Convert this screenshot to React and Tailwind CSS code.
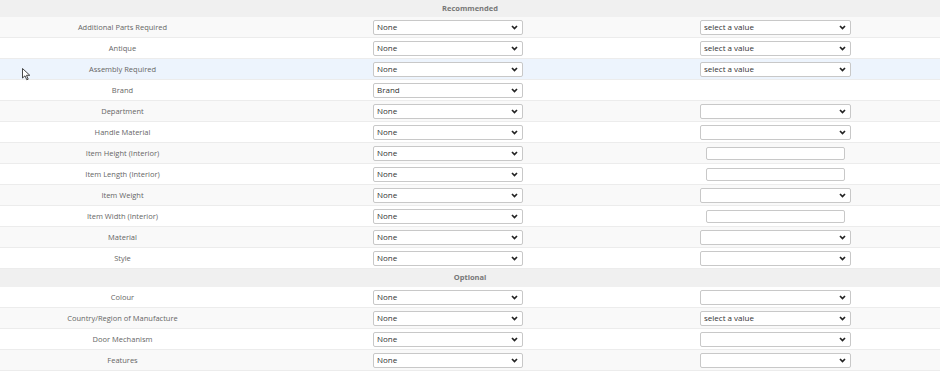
import React from 'react';

const recommended = [
  { label: 'Additional Parts Required', value: 'None', extra: 'select', text: 'select a value' },
  { label: 'Antique', value: 'None', extra: 'select', text: 'select a value' },
  { label: 'Assembly Required', value: 'None', extra: 'select', text: 'select a value', hover: true },
  { label: 'Brand', value: 'Brand', extra: null },
  { label: 'Department', value: 'None', extra: 'select', text: '' },
  { label: 'Handle Material', value: 'None', extra: 'select', text: '' },
  { label: 'Item Height (Interior)', value: 'None', extra: 'input' },
  { label: 'Item Length (Interior)', value: 'None', extra: 'input' },
  { label: 'Item Weight', value: 'None', extra: 'select', text: '' },
  { label: 'Item Width (Interior)', value: 'None', extra: 'input' },
  { label: 'Material', value: 'None', extra: 'select', text: '' },
  { label: 'Style', value: 'None', extra: 'select', text: '' },
];

const optional = [
  { label: 'Colour', value: 'None', extra: 'select', text: '' },
  { label: 'Country/Region of Manufacture', value: 'None', extra: 'select', text: 'select a value' },
  { label: 'Door Mechanism', value: 'None', extra: 'select', text: '' },
  { label: 'Features', value: 'None', extra: 'select', text: '' },
];

const Chevron = () => (
  <svg className="pointer-events-none absolute right-[5px] top-[5px]" width="7" height="5" viewBox="0 0 7 5">
    <path d="M1 1 L3.5 3.5 L6 1" fill="none" stroke="#222" strokeWidth="1.7" />
  </svg>
);

const FakeSelect = ({ value, width }) => (
  <div className={`relative h-[15px] ${width}`}>
    <select
      defaultValue={value}
      className="block h-[15px] w-full appearance-none rounded-[2px] border border-[#c8c8c8] bg-white py-0 pl-[3px] text-[8px] leading-none text-[#333] outline-none"
    >
      <option value={value}>{value}</option>
    </select>
    <Chevron />
  </div>
);

const Row = ({ row, striped }) => {
  const bg = row.hover ? 'bg-[#edf4fd]' : striped ? 'bg-[#f9f9f9]' : 'bg-white';
  return (
    <div className={`grid h-[21px] grid-cols-[245px_406px_249px_1fr] items-center border-b border-[#ececec] ${bg}`}>
      <div className="pt-[2px] text-center text-[7.5px] leading-none text-[#666]">{row.label}</div>
      <div className="flex justify-center">
        <FakeSelect value={row.value} width="w-[150px]" />
      </div>
      <div className="flex justify-center">
        {row.extra === 'select' && <FakeSelect value={row.text} width="w-[151px]" />}
        {row.extra === 'input' && (
          <input type="text" className="block h-[13px] w-[139px] rounded-[2px] border border-[#c8c8c8] bg-white outline-none" />
        )}
      </div>
      <div />
    </div>
  );
};

const SectionHeader = ({ title, height }) => (
  <div className={`flex ${height} items-center justify-center bg-[#f0f0f0] text-[7.5px] font-bold text-[#777]`}>
    {title}
  </div>
);

export default function App() {
  return (
    <div className="relative h-[371px] w-[940px] overflow-hidden bg-white" style={{ fontFamily: '"Open Sans", "Noto Sans", sans-serif' }}>
      <SectionHeader title="Recommended" height="h-[17px]" />
      {recommended.map((row, i) => (
        <Row key={row.label} row={row} striped={i % 2 === 0} />
      ))}
      <SectionHeader title="Optional" height="h-[18px]" />
      {optional.map((row, i) => (
        <Row key={row.label} row={row} striped={i % 2 === 1} />
      ))}

      {/* mouse pointer */}
      <svg className="absolute left-[22px] top-[68px]" width="9" height="13" viewBox="0 0 9 13">
        <path d="M0.5 0.5 L0.5 10 L3 7.8 L4.8 11.8 L6.2 11.2 L4.5 7.3 L7.8 7.3 Z" fill="#fff" stroke="#333" strokeWidth="0.9" strokeLinejoin="round" />
      </svg>
    </div>
  );
}
